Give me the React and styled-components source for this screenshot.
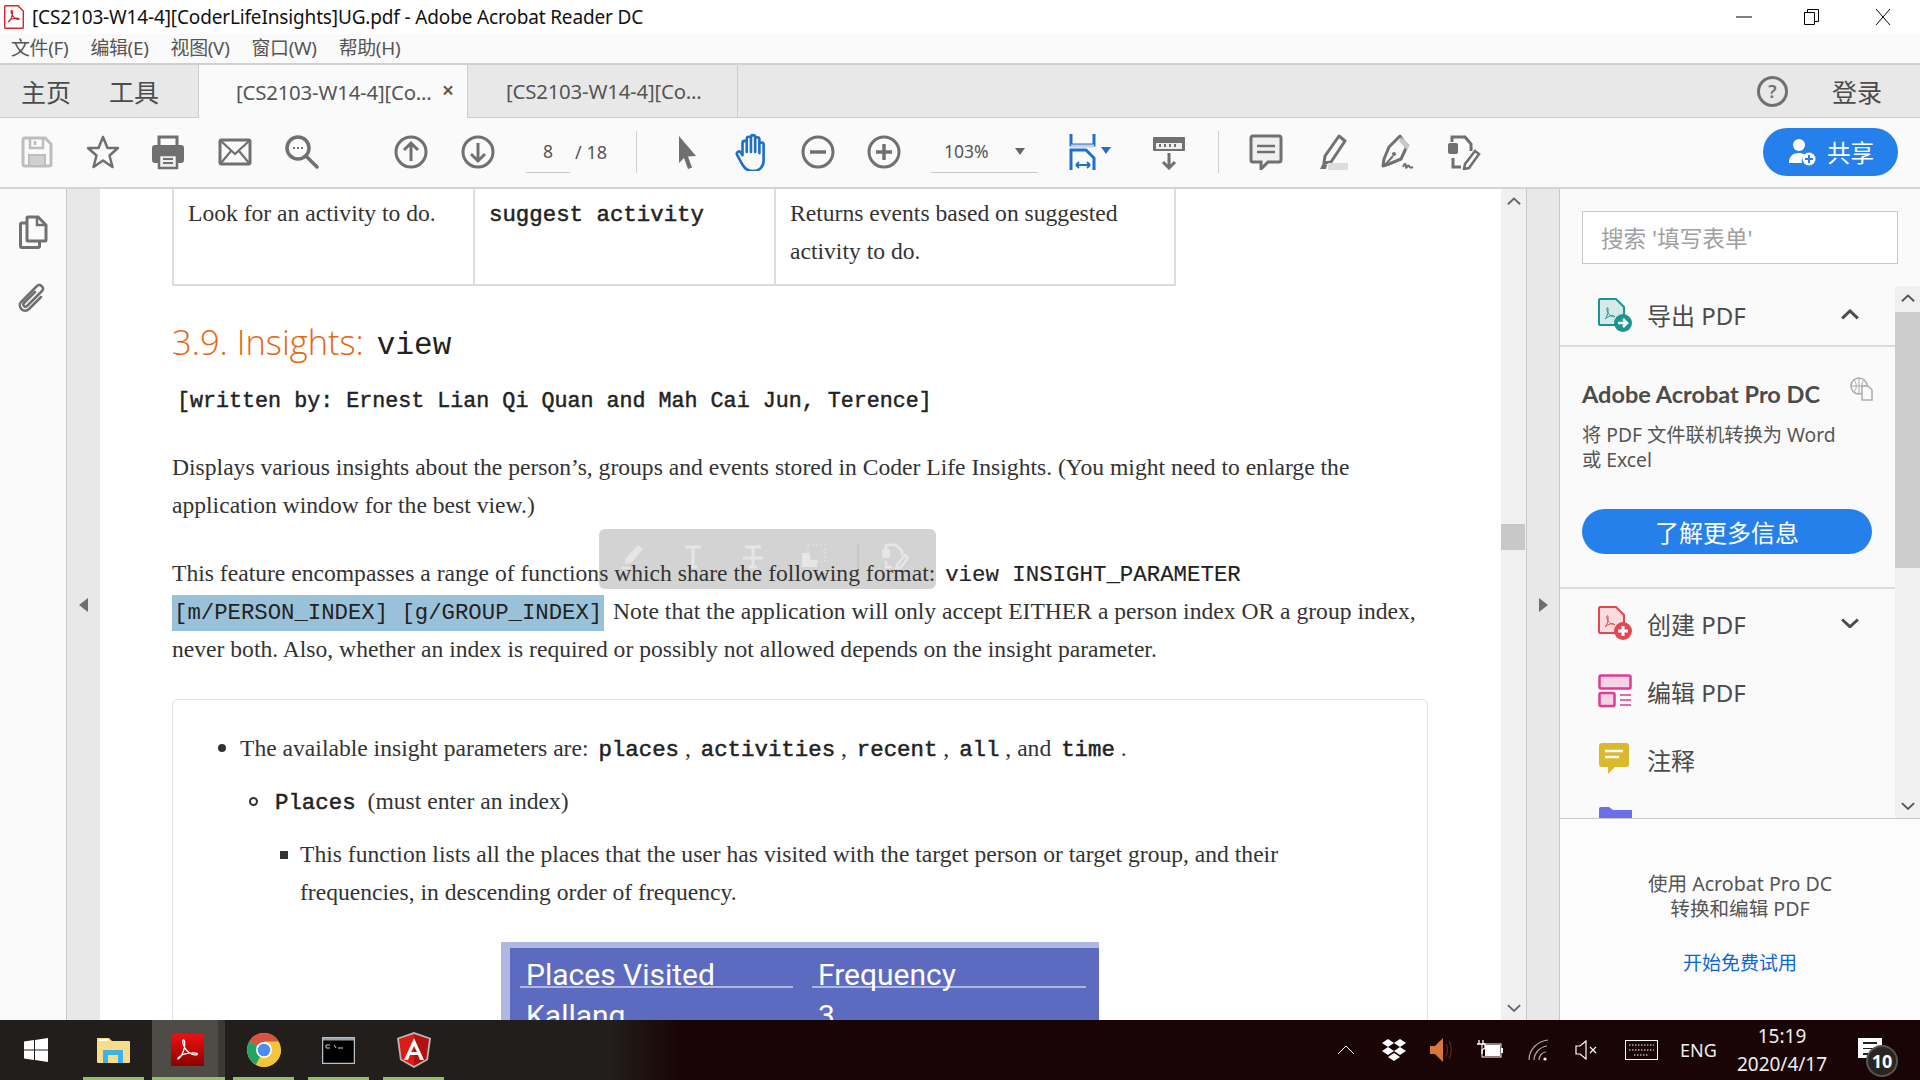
import React from "react";
import styled, { createGlobalStyle } from "styled-components";

const sans = `"Noto Sans", "Noto Sans CJK SC", sans-serif`;
const serif = `"Liberation Serif", serif`;
const mono = `"Liberation Mono", monospace`;

const GlobalStyle = createGlobalStyle`
  html, body { margin: 0; padding: 0; overflow: hidden; background: #fff; }
  * { box-sizing: border-box; }
`;

const Window = styled.div`
  width: 1920px;
  height: 1080px;
  display: flex;
  flex-direction: column;
  overflow: hidden;
  font-family: ${sans};
`;

const TitleBar = styled.div`
  height: 34px;
  flex: none;
  display: flex;
  align-items: center;
  padding-left: 4px;
  background: #fff;
  color: #111;
  font-size: 19px;
  white-space: nowrap;
`;

const TitleText = styled.span`
  margin: -1px 0 0 8px;
  letter-spacing: -0.15px;
`;

const WindowControls = styled.div`
  margin-left: auto;
  display: flex;
  align-items: center;
  height: 100%;
`;

const WindowButton = styled.div`
  width: ${(p) => p.$w || 68}px;
  height: 100%;
  display: flex;
  align-items: center;
  justify-content: center;
`;

const MenuBar = styled.div`
  height: 31px;
  flex: none;
  display: flex;
  align-items: center;
  gap: 22px;
  padding: 0 0 4px 11px;
  background: #fafafa;
  border-bottom: 2px solid #d0d0d0;
  color: #555;
  font-size: 18.9px;
  letter-spacing: -0.3px;
`;

const TabBar = styled.div`
  height: 53px;
  flex: none;
  display: flex;
  align-items: stretch;
  background: #e8e8e8;
  border-bottom: 1px solid #cdcdcd;
`;

const NavLink = styled.div`
  display: flex;
  align-items: center;
  width: ${(p) => p.$w}px;
  padding-left: ${(p) => p.$pad}px;
  color: #4b4b4b;
  font-size: 25px;
`;

const Tab = styled.div`
  width: 270px;
  margin-bottom: ${(p) => (p.$active ? "-1px" : "0")};
  position: relative;
  display: flex;
  align-items: center;
  padding-left: ${(p) => (p.$active ? 37 : 38)}px;
  background: ${(p) => (p.$active ? "#fafafa" : "#e8e8e8")};
  border-left: ${(p) => (p.$active ? "1px solid #cdcdcd" : "none")};
  border-right: 1px solid #cdcdcd;
  color: #555;
  font-size: 20.4px;
  letter-spacing: -0.2px;
`;

const TabClose = styled.span`
  position: absolute;
  left: 243px;
  top: 11px;
  color: #555;
  font-size: 21px;
  font-weight: 600;
`;

const TabBarEnd = styled.div`
  margin-left: auto;
  display: flex;
  align-items: center;
`;

const HelpCircle = styled.div`
  width: 31px;
  height: 31px;
  border: 3px solid #707070;
  border-radius: 50%;
  display: flex;
  align-items: center;
  justify-content: center;
  color: #707070;
  font-size: 18px;
  font-weight: 600;
`;

const Login = styled.div`
  margin: 0 38px 0 44px;
  color: #4b4b4b;
  font-size: 25px;
`;

const Toolbar = styled.div`
  height: 71px;
  flex: none;
  display: flex;
  align-items: center;
  padding: 0 0 2px 4px;
  background: #fafafa;
  border-bottom: 2px solid #d4d4d4;
`;

const ToolButton = styled.div`
  width: ${(p) => p.$w || 66}px;
  flex: none;
  margin-left: ${(p) => p.$ml || 0}px;
  display: flex;
  justify-content: center;
  align-items: center;
`;

const PageInput = styled.div`
  width: 44px;
  height: 42px;
  flex: none;
  margin-left: 15px;
  display: flex;
  align-items: center;
  justify-content: center;
  border-bottom: 1px solid #c8c8c8;
  color: #555;
  font-size: 17.5px;
`;

const PageTotal = styled.div`
  width: 66px;
  flex: none;
  padding-left: 5px;
  color: #555;
  font-size: 18px;
`;

const ToolDivider = styled.div`
  width: 1px;
  height: 42px;
  flex: none;
  margin: 0 ${(p) => p.$mr || 0}px 0 ${(p) => p.$ml || 0}px;
  background: #d0d0d0;
`;

const ZoomCombo = styled.div`
  width: 107px;
  height: 42px;
  flex: none;
  margin-left: 14px;
  display: flex;
  align-items: center;
  justify-content: space-between;
  padding: 0 13px 0 13px;
  border-bottom: 1px solid #c8c8c8;
  color: #555;
  font-size: 17.5px;
`;

const Caret = styled.span`
  width: 0;
  height: 0;
  border-left: 5px solid transparent;
  border-right: 5px solid transparent;
  border-top: 7px solid ${(p) => p.$color || "#666"};
`;

const ShareButton = styled.div`
  margin-left: auto;
  margin-right: 22px;
  width: 135px;
  height: 48px;
  flex: none;
  display: flex;
  align-items: center;
  justify-content: center;
  gap: 10px;
  border-radius: 24px;
  background: #2680eb;
  color: #fff;
  font-size: 23.5px;
`;

const Main = styled.div`
  flex: 1;
  min-height: 0;
  display: flex;
`;

const LeftRail = styled.div`
  width: 67px;
  flex: none;
  display: flex;
  flex-direction: column;
  align-items: center;
  gap: 33px;
  padding: 26px 0 0 2px;
  background: #fafafa;
  border-right: 1px solid #c8c8c8;
`;

const Gutter = styled.div`
  width: ${(p) => p.$w}px;
  flex: none;
  display: flex;
  align-items: center;
  justify-content: center;
  background: #e8e8e8;
`;

const Triangle = styled.span`
  width: 0;
  height: 0;
  border-top: 7px solid transparent;
  border-bottom: 7px solid transparent;
  ${(p) => (p.$right ? "border-left: 9px solid #6e6e6e;" : "border-right: 9px solid #6e6e6e;")}
`;

const DocPage = styled.div`
  position: relative;
  width: 1401px;
  flex: none;
  overflow: hidden;
  padding-left: 72px;
  background: #fff;
  color: #333;
  font-family: ${serif};
  font-size: 23.6px;
  line-height: 38px;
`;

const TableRow = styled.div`
  display: grid;
  grid-template-columns: 301px 301px 402px;
  width: 1004px;
  height: 97px;
  border: 2px solid #ddd;
  border-top: none;
`;

const TableCell = styled.div`
  padding: 5px 14px 0;
  white-space: nowrap;
  border-right: ${(p) => (p.$last ? "none" : "2px solid #ddd")};
`;

const Code = styled.code`
  margin: 0 ${(p) => p.$mr || 0}px 0 ${(p) => p.$ml ?? 4}px;
  font-family: ${mono};
  font-size: 22.4px;
  line-height: 0;
  color: #222;
  -webkit-text-stroke: ${(p) => (p.$bold ? "0.5px #222" : "0.15px #222")};
`;

const Heading = styled.h3`
  margin: 34px 0 0;
  height: 44px;
  display: flex;
  align-items: center;
  gap: 13px;
  color: #e8650f;
  font-family: "Open Sans", sans-serif;
  font-size: 34.5px;
  font-weight: 300;
  line-height: 44px;
`;

const HeadingCode = styled.code`
  margin-top: 8px;
  color: #222;
  font-family: ${mono};
  font-size: 31px;
`;

const Byline = styled.div`
  margin: 19px 0 0 5px;
  color: #222;
  font-family: ${mono};
  font-size: 21.7px;
  -webkit-text-stroke: 0.45px #222;
  white-space: nowrap;
`;

const Para = styled.p`
  position: relative;
  z-index: 1;
  margin: ${(p) => p.$mt}px 0 0;
  white-space: nowrap;
`;

const Highlight = styled.span`
  margin-right: 3px;
  padding: 5px 2px;
  background: #9ac1da;
  font-family: ${mono};
  font-size: 22.3px;
  line-height: 0;
  color: #222;
`;

const Card = styled.div`
  width: 1256px;
  height: 400px;
  margin-top: 31px;
  padding-top: 29px;
  border: 1px solid #e2e2e2;
  border-radius: 6px;
`;

const ListItem = styled.div`
  position: relative;
  margin: ${(p) => p.$mt || 0}px 0 0 ${(p) => p.$ml}px;
  white-space: nowrap;
`;

const Marker = styled.span`
  position: absolute;
  top: ${(p) => (p.$kind === "square" ? 16 : 15)}px;
  left: ${(p) => p.$left}px;
  width: ${(p) => (p.$kind === "circle" ? 9 : 8)}px;
  height: ${(p) => (p.$kind === "circle" ? 9 : 8)}px;
  border-radius: ${(p) => (p.$kind === "square" ? 0 : "50%")};
  background: ${(p) => (p.$kind === "circle" ? "transparent" : "#333")};
  border: ${(p) => (p.$kind === "circle" ? "2px solid #333" : "none")};
`;

const Screenshot = styled.div`
  width: 598px;
  height: 120px;
  margin: 31px 0 0 328px;
  padding: 6px 0 0 9px;
  background: #b0b7e0;
`;

const ScreenshotInner = styled.div`
  display: grid;
  grid-template-columns: 273px 274px;
  column-gap: 19px;
  align-content: start;
  height: 100%;
  padding: 8px 12px 0 10px;
  background: #5c6bc0;
  color: #fff;
  font-family: Roboto, sans-serif;
  font-size: 30px;
  line-height: 32px;
`;

const ScreenshotHead = styled.div`
  height: 32px;
  padding-left: 6px;
  line-height: 38px;
  border-bottom: 2px solid #aeb6e2;
`;

const ScreenshotCell = styled.div`
  margin-top: 12px;
  padding-left: 6px;
`;

const FloatingBar = styled.div`
  position: absolute;
  left: 499px;
  top: 340px;
  width: 337px;
  height: 60px;
  display: flex;
  align-items: flex-start;
  padding: 14px 0 0 4px;
  border-radius: 6px;
  background: #d3d3d3;
`;

const FloatSlot = styled.div`
  width: ${(p) => p.$w}px;
  flex: none;
  display: flex;
  justify-content: center;
`;

const DocScroll = styled.div`
  position: relative;
  width: 26px;
  flex: none;
  background: #f0f0f0;
  border-right: 1px solid #c8c8c8;
`;

const ScrollThumb = styled.div`
  position: absolute;
  left: 0;
  top: 335px;
  width: 24px;
  height: 26px;
  background: #c8c8c8;
`;

const ScrollArrow = styled.div`
  position: absolute;
  left: 0;
  right: 0;
  ${(p) => (p.$down ? "bottom: 8px;" : "top: 8px;")}
  display: flex;
  justify-content: center;
`;

const RightPanel = styled.div`
  flex: 1;
  min-width: 0;
  display: flex;
  flex-direction: column;
  background: #fafafa;
  border-left: 1px solid #c8c8c8;
`;

const SearchArea = styled.div`
  height: 97px;
  flex: none;
  padding: 22px 22px 0 22px;
`;

const SearchBox = styled.div`
  height: 53px;
  display: flex;
  align-items: center;
  padding-left: 18px;
  background: #fff;
  border: 1px solid #c8c8c8;
  color: #a0a0a0;
  font-size: 22.6px;
`;

const ToolArea = styled.div`
  position: relative;
  height: 533px;
  flex: none;
  display: flex;
  border-bottom: 1px solid #c8c8c8;
`;

const ToolList = styled.div`
  width: 335px;
  flex: none;
  overflow: hidden;
`;

const ToolRow = styled.div`
  height: ${(p) => p.$h}px;
  display: flex;
  align-items: center;
  gap: 15px;
  padding: 0 36px ${(p) => (p.$divider ? 2 : 0)}px 38px;
  border-bottom: ${(p) => (p.$divider ? "2px solid #ddd" : "none")};
  color: #4b4b4b;
  font-size: 24px;
  white-space: nowrap;
`;

const RowChevron = styled.div`
  margin-left: auto;
  display: flex;
`;

const Promo = styled.div`
  position: relative;
  height: 242px;
  padding: 29px 22px 0;
  border-bottom: 2px solid #ddd;
`;

const PromoTitle = styled.div`
  height: 36px;
  color: #4b4b4b;
  font-family: Lato, ${sans};
  font-size: 23.5px;
  font-weight: 700;
  line-height: 36px;
`;

const PromoGlobe = styled.div`
  position: absolute;
  right: 21px;
  top: 30px;
  display: flex;
`;

const PromoText = styled.div`
  margin-top: 10px;
  color: #555;
  font-size: 19.3px;
  line-height: 25px;
  white-space: nowrap;
`;

const PromoButton = styled.div`
  width: 290px;
  height: 45px;
  margin-top: 37px;
  display: flex;
  align-items: center;
  justify-content: center;
  border-radius: 23px;
  background: #2680eb;
  color: #fff;
  font-size: 24px;
`;

const PanelScroll = styled.div`
  position: relative;
  width: 25px;
  flex: none;
  background: #f0f0f0;
`;

const PanelThumb = styled.div`
  position: absolute;
  left: 0;
  right: 0;
  top: 26px;
  height: 256px;
  background: #cdcdcd;
`;

const PanelFooter = styled.div`
  flex: 1;
  display: flex;
  flex-direction: column;
  align-items: center;
  padding-top: 52px;
  background: #fcfcfc;
  color: #555;
  font-size: 19.6px;
  line-height: 25px;
  text-align: center;
`;

const FooterLink = styled.div`
  margin-top: 30px;
  color: #0d66d0;
  font-size: 19px;
`;

const Taskbar = styled.div`
  height: 60px;
  flex: none;
  display: flex;
  align-items: center;
  background: linear-gradient(90deg, #211e1b 0, #211e1b 610px, #190505 680px, #190505 100%);
  color: #fff;
`;

const StartButton = styled.div`
  width: 83px;
  height: 100%;
  flex: none;
  padding-left: 24px;
  display: flex;
  align-items: center;
`;

const AppSlot = styled.div`
  width: ${(p) => (p.$active ? 73 : 61)}px;
  height: 100%;
  flex: none;
  margin-right: ${(p) => p.$mr}px;
  display: flex;
  justify-content: ${(p) => (p.$active ? "flex-start" : "center")};
  align-items: center;
  padding-left: ${(p) => (p.$active ? 19 : 0)}px;
  background: ${(p) => (p.$active ? "linear-gradient(90deg, #4f4b47 0 66px, #3c3936 66px)" : "none")};
  box-shadow: inset 0 -3px 0 #8fc45b;
`;

const Tray = styled.div`
  margin-left: auto;
  display: flex;
  align-items: center;
  height: 100%;
`;

const TrayItem = styled.div`
  width: ${(p) => p.$w}px;
  flex: none;
  display: flex;
  justify-content: center;
  align-items: center;
`;

const Lang = styled.div`
  width: 45px;
  flex: none;
  margin-left: 3px;
  font-size: 18px;
  text-align: center;
  color: #eee;
`;

const Clock = styled.div`
  width: 108px;
  flex: none;
  margin-left: 7px;
  color: #eee;
  font-size: 19px;
  line-height: 28px;
  text-align: center;
`;

const Notify = styled.div`
  position: relative;
  width: 84px;
  flex: none;
  height: 100%;
`;

const NotifyBubble = styled.div`
  position: absolute;
  left: 22px;
  top: 18px;
  width: 24px;
  height: 20px;
  background: #fff;
`;

const NotifyLine = styled.div`
  width: 14px;
  height: 1.5px;
  margin: 4px 0 0 5px;
  background: #222;
`;

const NotifyBadge = styled.div`
  position: absolute;
  left: 30px;
  top: 25px;
  width: 32px;
  height: 32px;
  display: flex;
  align-items: center;
  justify-content: center;
  border-radius: 50%;
  border: 2px solid #555;
  background: #2a2522;
  color: #fff;
  font-size: 18px;
  font-weight: 700;
`;

const Svg = ({ s = 36, w, h, box = "0 0 36 36", children, ...rest }) => (
  <svg width={w || s} height={h || s} viewBox={box} fill="none" {...rest}>
    {children}
  </svg>
);

const G = "#707070";

const swoosh =
  "M7 25c2-1 4-5 5-9 1-3 1-8-.5-8-2 0 0 8 5 12 2 1.5 6 2.500 6 1 0-2-7-1.500-11 0-3 1.500-5 3-4.500 4z";

const SaveIcon = () => (
  <Svg>
    <path d="M6 4h20l6 6v20a2 2 0 0 1-2 2H6a2 2 0 0 1-2-2V6a2 2 0 0 1 2-2z" stroke="#bdbdbd" strokeWidth="3" />
    <path d="M11 4v10h13V4M16 7v4" stroke="#bdbdbd" strokeWidth="2.500" />
    <path d="M10 32V21h16v11z" fill="#d0d0d0" stroke="#bdbdbd" strokeWidth="2" />
  </Svg>
);

const StarIcon = () => (
  <Svg>
    <path d="M18 3l4.500 11H33l-8.500 7.500L27.500 33 18 26.500 8.500 33l3-11.500L3 14h10.500z" stroke={G} strokeWidth="2.500" strokeLinejoin="round" />
  </Svg>
);

const PrintIcon = () => (
  <Svg>
    <path d="M9 12V3h18v9" stroke={G} strokeWidth="3" />
    <path d="M5 11h26a3 3 0 0 1 3 3v12a3 3 0 0 1-3 3h-3v-8H8v8H5a3 3 0 0 1-3-3V14a3 3 0 0 1 3-3z" fill={G} />
    <path d="M9 21h18v13H9z" fill="#eee" stroke={G} strokeWidth="2.500" />
    <path d="M13 25h10M13 29h10" stroke={G} strokeWidth="2" />
  </Svg>
);

const MailIcon = () => (
  <Svg>
    <rect x="3" y="6" width="30" height="24" rx="1.500" stroke={G} strokeWidth="3" />
    <path d="M4 7l14 13L32 7M4 29l10-12M32 29L22 17" stroke={G} strokeWidth="2.200" />
  </Svg>
);

const SearchIcon = () => (
  <Svg>
    <circle cx="15" cy="14" r="11" stroke={G} strokeWidth="3.500" />
    <path d="M23 22l11 11" stroke={G} strokeWidth="3.500" strokeLinecap="round" />
    <path d="M10 14h2M14 14h2M18 14h2" stroke={G} strokeWidth="2" />
  </Svg>
);

const ArrowCircle = ({ down }) => (
  <Svg style={down ? { transform: "rotate(180deg)" } : undefined}>
    <circle cx="18" cy="18" r="15" stroke={G} strokeWidth="3" />
    <path d="M18 27V10M11 16l7-7 7 7" stroke={G} strokeWidth="3" />
  </Svg>
);

const PointerIcon = () => (
  <Svg>
    <path d="M9 2l17 20-8 .5 4 11-4 1.500-4-11-5 5z" fill={G} />
  </Svg>
);

const HandIcon = () => (
  <Svg s={38}>
    <path
      d="M9 21V9.500a2 2 0 0 1 4 0V18 5.500a2 2 0 0 1 4 0V18 4a2 2 0 0 1 4 0v14V6a2 2 0 0 1 4 0v13 -8a2 2 0 0 1 4 0v15c0 6-4 10-10 10-5 0-8-2-10-6L4 21c-1.500-3 2-4.500 3.500-2.500L9 21z"
      stroke="#2070c8"
      strokeWidth="2.500"
      strokeLinejoin="round"
    />
  </Svg>
);

const ZoomCircle = ({ plus }) => (
  <Svg>
    <circle cx="18" cy="18" r="15" stroke={G} strokeWidth="3" />
    <path d={plus ? "M10 18h16M18 10v16" : "M10 18h16"} stroke={G} strokeWidth="3.500" />
  </Svg>
);

const FitIcon = () => (
  <Svg w={46} h={38} box="0 0 46 38">
    <path d="M3 1v11h23V1" stroke="#2070c8" strokeWidth="3" />
    <path d="M3 13h23" stroke="#ccd" strokeWidth="3" />
    <path d="M3 37V17h15l8 8v12" stroke="#2070c8" strokeWidth="3" />
    <path d="M8 32h14M8 32l3-3M8 32l3 3M22 32l-3-3M22 32l-3 3" stroke="#2070c8" strokeWidth="1.800" />
    <path d="M33 14h10l-5 7z" fill="#2070c8" />
  </Svg>
);

const ScrollToolIcon = () => (
  <Svg>
    <rect x="2" y="3" width="32" height="14" rx="1" fill={G} />
    <rect x="5" y="9" width="26" height="6" fill="#eee" />
    <path d="M9 10v3M14 10v3M19 10v3M24 10v3" stroke={G} strokeWidth="2" />
    <path d="M18 19v15M12 28l6 6 6-6" stroke={G} strokeWidth="3" />
  </Svg>
);

const CommentIcon = () => (
  <Svg>
    <path d="M5 2h26a2 2 0 0 1 2 2v22a2 2 0 0 1-2 2H20l-7 7v-7H5a2 2 0 0 1-2-2V4a2 2 0 0 1 2-2z" stroke={G} strokeWidth="3" fill="#f0f0f0" />
    <path d="M9 12h18M9 18h18" stroke={G} strokeWidth="2.500" />
  </Svg>
);

const HighlightIcon = () => (
  <Svg>
    <path d="M25 2l6 5-14 21-7 1 1-7z" stroke={G} strokeWidth="3" strokeLinejoin="round" />
    <path d="M6 35l3-6 4 2-1 4z" fill={G} />
    <rect x="14" y="29" width="20" height="7" fill="#ddd" />
  </Svg>
);

const SignIcon = () => (
  <Svg>
    <path d="M20 2l7 10-6 13-12 5-6 2 1-7 5-12z" stroke={G} strokeWidth="3" strokeLinejoin="round" />
    <path d="M21 3l9 8-3 5-8-9z" fill="#c8c8c8" />
    <path d="M5 31l8-9" stroke={G} strokeWidth="2" />
    <circle cx="14" cy="20" r="2" fill={G} />
    <path d="M23 33c2-5 3-3 3 0s2-3 3-1 2 2 4 1" stroke={G} strokeWidth="2" />
  </Svg>
);

const ToolsIcon = () => (
  <Svg>
    <path d="M6 8V3h13l6 7v7" stroke={G} strokeWidth="3" />
    <rect x="2" y="9" width="10" height="11" rx="2" fill={G} />
    <path d="M7 24v9h8" stroke={G} strokeWidth="3" />
    <path d="M29 17l4 3-10 14-5 1 1-5z" stroke={G} strokeWidth="2.500" />
  </Svg>
);

const PagesIcon = () => (
  <Svg w={30} h={34} box="0 0 30 34">
    <path d="M9 8H3a1.500 1.500 0 0 0-1.500 1.500V31A1.500 1.500 0 0 0 3 32.500h16a1.500 1.500 0 0 0 1.500-1.500v-4" stroke={G} strokeWidth="3" />
    <path d="M9 2h10l8 8v15a1 1 0 0 1-1 1H9a1 1 0 0 1-1-1V3a1 1 0 0 1 1-1z" stroke={G} strokeWidth="3" fill="#fafafa" />
    <path d="M18 2v8h9" stroke={G} strokeWidth="2.500" />
  </Svg>
);

const ClipIcon = () => (
  <Svg s={32} box="0 0 32 32" style={{ marginLeft: -4 }}>
    <path
      d="M19 10L8 21c-2 2 1 5 3 3L26 9c3-3-2-8-5-5L5 20c-4 5 3 12 8 7l12-12"
      stroke={G}
      strokeWidth="2.500"
      strokeLinecap="round"
    />
  </Svg>
);

const ShareUserIcon = () => (
  <Svg s={30} box="0 0 30 30">
    <circle cx="12" cy="8" r="6" fill="#fff" />
    <path d="M2 26c0-7 4-10 10-10 3 0 5 1 6 2-3 2-4 5-3 8z" fill="#fff" />
    <circle cx="22" cy="22" r="6.500" fill="#fff" />
    <path d="M22 18v8M18 22h8" stroke="#2680eb" strokeWidth="2" />
  </Svg>
);

const Chevron = ({ down, size = 18, color = "#4b4b4b", weight = 3 }) => (
  <svg width={size} height={size * 0.6} viewBox="0 0 18 11" fill="none">
    <path d={down ? "M1 1.500l8 7.500 8-7.500" : "M1 9.500L9 2l8 7.500"} stroke={color} strokeWidth={weight} />
  </svg>
);

const DocBadge = ({ color, tint, children }) => (
  <Svg s={34} box="0 0 34 34">
    <path d="M2 1h16l8 8v18H2a1 1 0 0 1-1-1V2a1 1 0 0 1 1-1z" fill={tint} stroke={color} strokeWidth="2" />
    <path d="M7 21c2-2 3-5 3-8s0-4-1-3 1 7 5 8 3 1 2 0-6 0-9 3z" stroke={color} strokeWidth="1" />
    <circle cx="25" cy="25" r="9" fill={color} />
    {children}
  </Svg>
);

const ExportIcon = () => (
  <DocBadge color="#1c9590" tint="#d5e9e8">
    <path d="M20 25h8M25 21l4 4-4 4" stroke="#fff" strokeWidth="2.500" />
  </DocBadge>
);

const CreateIcon = () => (
  <DocBadge color="#e34850" tint="#f9dcdd">
    <path d="M20 25h10M25 20v10" stroke="#fff" strokeWidth="3" />
  </DocBadge>
);

const EditIcon = () => (
  <Svg s={34} box="0 0 34 34">
    <rect x="1.500" y="1.500" width="31" height="13" rx="1.500" fill="#f6d3e6" stroke="#e03d92" strokeWidth="2.500" />
    <rect x="1.500" y="19" width="15" height="13" rx="1.500" fill="#f6d3e6" stroke="#e03d92" strokeWidth="2.500" />
    <path d="M22 21h11M22 26h11M22 31h11" stroke="#e03d92" strokeWidth="1.500" />
  </Svg>
);

const NoteIcon = () => (
  <Svg s={34} box="0 0 34 34">
    <path d="M4 1h24a3 3 0 0 1 3 3v18a3 3 0 0 1-3 3H17l-7 7v-7H4a3 3 0 0 1-3-3V4a3 3 0 0 1 3-3z" fill="#dcb82c" />
    <path d="M7 9h18M7 15h14" stroke="#fff" strokeWidth="2.500" />
  </Svg>
);

const NextToolIcon = () => (
  <Svg s={36} box="0 0 36 36">
    <path d="M1 18V4a2 2 0 0 1 2-2h8l4 3h10l9 0v13" fill="#6c6fe8" />
  </Svg>
);

const GlobeIcon = () => (
  <Svg s={24} box="0 0 24 24">
    <circle cx="9" cy="9" r="8" stroke="#aaa" strokeWidth="1.500" />
    <path d="M1 9h16M9 1v16M4 3c3 3 3 9 0 12M14 3c-3 3-3 9 0 12" stroke="#aaa" strokeWidth="1" />
    <path d="M12 9h6l4 4v10H12z" fill="#fafafa" stroke="#aaa" strokeWidth="1.500" />
  </Svg>
);

const PdfFileIcon = () => (
  <Svg w={20} h={26} box="0 0 30 36">
    <path d="M3 1h18l8 8v24a2 2 0 0 1-2 2H3a2 2 0 0 1-2-2V3a2 2 0 0 1 2-2z" fill="#fff" stroke="#d8232a" strokeWidth="2.200" />
    <path d={swoosh} stroke="#d8232a" strokeWidth="1.800" />
  </Svg>
);

const WindowsLogo = () => (
  <Svg s={24} box="0 0 24 24">
    <path d="M0 3.500l10-1.400v9.400H0zM11 2l13-2v11.500H11zM0 12.500h10v9.400L0 20.500zM11 12.500h13V24l-13-2z" fill="#fff" />
  </Svg>
);

const FolderLogo = () => (
  <Svg w={33} h={28} box="0 0 33 28">
    <path d="M0 2h12l3 3h17a1 1 0 0 1 1 1v20a1 1 0 0 1-1 1H1a1 1 0 0 1-1-1z" fill="#f9dc8a" />
    <path d="M2 3h9v2H2z" fill="#fff" />
    <path d="M6 14h20v13h-5v-8h-10v8H6z" fill="#3bb3e6" />
  </Svg>
);

const AcrobatLogo = () => (
  <svg width="33" height="32" viewBox="0 0 33 32" fill="none">
    <defs>
      <linearGradient id="acr" x1="0" y1="0" x2="0" y2="1">
        <stop offset="0" stopColor="#ee1111" />
        <stop offset="1" stopColor="#8c0000" />
      </linearGradient>
    </defs>
    <rect width="33" height="32" fill="url(#acr)" />
    <path d="M7 25c3-2 5-6 6-10 1-4 1-9-.5-9-2 0 0 9 6 13 3 2 8 2.500 8 1 0-2-9-1-13 0-4 1.500-7 3.500-6.500 5z" stroke="#fff" strokeWidth="1.300" />
  </svg>
);

const ChromeLogo = () => (
  <Svg s={34} box="0 0 34 34">
    <circle cx="17" cy="17" r="17" fill="#f3c53b" />
    <path d="M17 17L2.300 8.500A17 17 0 0 1 31.700 8.500H17z" fill="#d95244" />
    <path d="M17 17L9 31.700A17 17 0 0 1 2.300 8.500z" fill="#1fa463" />
    <path d="M17 17h17a17 17 0 0 1-25 14.700z" fill="#f3c53b" />
    <circle cx="17" cy="17" r="8" fill="#fff" />
    <circle cx="17" cy="17" r="6.300" fill="#4b8df0" />
  </Svg>
);

const CmdLogo = () => (
  <svg width="33" height="27" viewBox="0 0 33 27" fill="none">
    <rect x="0.500" y="0.500" width="32" height="26" fill="#000" stroke="#b8c0c8" strokeWidth="1.500" />
    <rect x="1" y="1" width="31" height="2.500" fill="#9aa2aa" />
    <path d="M4 8h4M4 11h4M4 8v3M10 9v0M12 8l2 3M16 11h5" stroke="#ccc" strokeWidth="1" />
  </svg>
);

const AngularLogo = () => (
  <Svg w={36} h={36} box="0 0 36 36">
    <path d="M18 0L1 6l3 22 14 8 14-8 3-22z" fill="#b8b8b8" />
    <path d="M18 2L3 7l2.600 20L18 34z" fill="#dd1b16" />
    <path d="M18 2l15 5-2.600 20L18 34z" fill="#b31010" />
    <path d="M18 6L8 28h4l2-5h8l2 5h4zM18 14l3 6h-6z" fill="#fff" />
  </Svg>
);

const DropboxIcon = () => (
  <Svg w={24} h={24} box="0 0 24 24">
    <path d="M6 1l6 4-6 4-6-4zM18 1l6 4-6 4-6-4zM6 9l6 4-6 4-6-4zM18 9l6 4-6 4-6-4zM12 15l6 4-6 4-6-4z" fill="#fff" />
  </Svg>
);

const SpeakerIcon = () => (
  <Svg w={24} h={26} box="0 0 24 26">
    <path d="M0 9h5l8-8v24l-8-8H0z" fill="#d9763a" />
    <path d="M16 7c2 3 2 9 0 12M19 4c3 5 3 13 0 18" stroke="#5a2a18" strokeWidth="1.200" />
  </Svg>
);

const BatteryIcon = () => (
  <Svg w={26} h={20} box="0 0 26 20">
    <path d="M2 0v4M6 0v4M0 4h8v4l-3 2v4" stroke="#fff" strokeWidth="1.300" />
    <rect x="5" y="4" width="19" height="13" stroke="#fff" strokeWidth="1" />
    <rect x="8" y="5" width="15" height="11" fill="#fff" />
    <rect x="24" y="8" width="2" height="5" fill="#fff" />
  </Svg>
);

const WifiIcon = () => (
  <Svg s={22} box="0 0 22 22">
    <path d="M1 21C1 10 10 2 20 1M6 21c0-7 6-13 13-14M11 21c0-4 3-8 7-8" stroke="#aaa" strokeWidth="1.200" />
    <circle cx="17" cy="20" r="1.600" fill="#fff" />
  </Svg>
);

const MuteIcon = () => (
  <Svg w={22} h={20} box="0 0 22 20">
    <path d="M1 6h4l6-5v18l-6-5H1z" stroke="#fff" strokeWidth="1.200" />
    <path d="M15 7l6 6M21 7l-6 6" stroke="#fff" strokeWidth="1.200" />
  </Svg>
);

const KeyboardIcon = () => (
  <Svg w={33} h={20} box="0 0 33 20">
    <rect x="0.500" y="0.500" width="32" height="19" stroke="#fff" />
    <path d="M4 5h25M4 10h25M9 15h15" stroke="#fff" strokeDasharray="1.500 1.500" />
  </Svg>
);

const floatColor = "#e6e6e6";

export default function App() {
  return (
    <Window>
      <GlobalStyle />
      <TitleBar>
        <PdfFileIcon />
        <TitleText>[CS2103-W14-4][CoderLifeInsights]UG.pdf - Adobe Acrobat Reader DC</TitleText>
        <WindowControls>
          <WindowButton>
            <svg width="16" height="2"><path d="M0 1h16" stroke="#000" /></svg>
          </WindowButton>
          <WindowButton>
            <svg width="16" height="16" fill="none">
              <path d="M.5 3.500h10v12H.5zM3.500 3.500v-3h11v12h-4" stroke="#000" />
            </svg>
          </WindowButton>
          <WindowButton $w={74}>
            <svg width="16" height="16"><path d="M1 0l14 16M15 0L1 16" stroke="#000" /></svg>
          </WindowButton>
        </WindowControls>
      </TitleBar>

      <MenuBar>
        <span>文件(F)</span>
        <span>编辑(E)</span>
        <span>视图(V)</span>
        <span>窗口(W)</span>
        <span>帮助(H)</span>
      </MenuBar>

      <TabBar>
        <NavLink $w={105} $pad={21}>主页</NavLink>
        <NavLink $w={93} $pad={4}>工具</NavLink>
        <Tab $active>
          [CS2103-W14-4][Co...
          <TabClose>×</TabClose>
        </Tab>
        <Tab>[CS2103-W14-4][Co...</Tab>
        <TabBarEnd>
          <HelpCircle>?</HelpCircle>
          <Login>登录</Login>
        </TabBarEnd>
      </TabBar>

      <Toolbar>
        <ToolButton><SaveIcon /></ToolButton>
        <ToolButton><StarIcon /></ToolButton>
        <ToolButton $ml={-1}><PrintIcon /></ToolButton>
        <ToolButton $ml={1}><MailIcon /></ToolButton>
        <ToolButton><SearchIcon /></ToolButton>
        <ToolButton $ml={44}><ArrowCircle /></ToolButton>
        <ToolButton $ml={1}><ArrowCircle down /></ToolButton>
        <PageInput>8</PageInput>
        <PageTotal>/ 18</PageTotal>
        <ToolDivider $mr={16} />
        <ToolButton $ml={4} $w={62}><PointerIcon /></ToolButton>
        <ToolButton><HandIcon /></ToolButton>
        <ToolButton><ZoomCircle /></ToolButton>
        <ToolButton><ZoomCircle plus /></ToolButton>
        <ZoomCombo>103%<Caret /></ZoomCombo>
        <ToolButton $ml={20}><FitIcon /></ToolButton>
        <ToolButton $ml={12}><ScrollToolIcon /></ToolButton>
        <ToolDivider $ml={16} $mr={14} />
        <ToolButton><CommentIcon /></ToolButton>
        <ToolButton><HighlightIcon /></ToolButton>
        <ToolButton><SignIcon /></ToolButton>
        <ToolButton><ToolsIcon /></ToolButton>
        <ShareButton><ShareUserIcon />共享</ShareButton>
      </Toolbar>

      <Main>
        <LeftRail>
          <PagesIcon />
          <ClipIcon />
        </LeftRail>
        <Gutter $w={33}><Triangle /></Gutter>

        <DocPage>
          <TableRow>
            <TableCell>Look for an activity to do.</TableCell>
            <TableCell><Code $bold $ml={0}>suggest activity</Code></TableCell>
            <TableCell $last>Returns events based on suggested<br />activity to do.</TableCell>
          </TableRow>

          <Heading>3.9. Insights: <HeadingCode>view</HeadingCode></Heading>
          <Byline>[written by: Ernest Lian Qi Quan and Mah Cai Jun, Terence]</Byline>

          <Para $mt={27}>
            Displays various insights about the person’s, groups and events stored in Coder Life Insights. (You might need to enlarge the<br />
            application window for the best view.)
          </Para>

          <Para $mt={30}>
            This feature encompasses a range of functions which share the following format: <Code>view INSIGHT_PARAMETER</Code><br />
            <Highlight>[m/PERSON_INDEX] [g/GROUP_INDEX]</Highlight> Note that the application will only accept EITHER a person index OR a group index,<br />
            never both. Also, whether an index is required or possibly not allowed depends on the insight parameter.
          </Para>

          <Card>
            <ListItem $ml={67}>
              <Marker $left={-22} />
              The available insight parameters are: <Code $bold>places</Code> , <Code $bold>activities</Code> , <Code $bold>recent</Code> , <Code $bold>all</Code> , and <Code $bold>time</Code> .
            </ListItem>
            <ListItem $ml={98} $mt={15}>
              <Marker $left={-22} $kind="circle" />
              <Code $bold $mr={6}>Places</Code> (must enter an index)
            </ListItem>
            <ListItem $ml={127} $mt={15}>
              <Marker $left={-20} $kind="square" />
              This function lists all the places that the user has visited with the target person or target group, and their<br />
              frequencies, in descending order of frequency.
            </ListItem>
            <Screenshot>
              <ScreenshotInner>
                <ScreenshotHead>Places Visited</ScreenshotHead>
                <ScreenshotHead>Frequency</ScreenshotHead>
                <ScreenshotCell>Kallang</ScreenshotCell>
                <ScreenshotCell>3</ScreenshotCell>
              </ScreenshotInner>
            </Screenshot>
          </Card>

          <FloatingBar>
            <FloatSlot $w={60}>
              <svg width="24" height="26" fill="none"><path d="M17 2l5 4-12 14-6 1 1-6z" fill={floatColor} /><path d="M1 25h8" stroke={floatColor} strokeWidth="2" /></svg>
            </FloatSlot>
            <FloatSlot $w={60}>
              <svg width="24" height="26" fill="none"><path d="M4 4h16M12 4v20M8 24h8" stroke={floatColor} strokeWidth="3" /></svg>
            </FloatSlot>
            <FloatSlot $w={60}>
              <svg width="24" height="26" fill="none"><path d="M4 4h16M12 4v20M8 24h8M2 15h20" stroke={floatColor} strokeWidth="3" /></svg>
            </FloatSlot>
            <FloatSlot $w={60}>
              <svg width="26" height="26" fill="none"><path d="M8 2h17v17H8z" stroke={floatColor} strokeDasharray="2 2" /><path d="M2 10h8v7h7v7H2z" fill={floatColor} /></svg>
            </FloatSlot>
            <FloatSlot $w={30}>
              <svg width="2" height="30"><path d="M1 0v30" stroke="#bdbdbd" /></svg>
            </FloatSlot>
            <FloatSlot $w={44}>
              <svg width="28" height="26" fill="none"><path d="M5 6V2h10l6 6v4M5 18v6h6M24 12l3 3-8 10-4 1 1-4z" stroke={floatColor} strokeWidth="2.500" /><rect x="1" y="6" width="8" height="9" rx="1.500" fill={floatColor} /></svg>
            </FloatSlot>
          </FloatingBar>
        </DocPage>

        <DocScroll>
          <ScrollArrow><Chevron size={14} color="#666" weight={2.500} /></ScrollArrow>
          <ScrollThumb />
          <ScrollArrow $down><Chevron down size={14} color="#666" weight={2.500} /></ScrollArrow>
        </DocScroll>
        <Gutter $w={32}><Triangle $right /></Gutter>

        <RightPanel>
          <SearchArea>
            <SearchBox>搜索 '填写表单'</SearchBox>
          </SearchArea>
          <ToolArea>
            <ToolList>
              <ToolRow $h={61} $divider>
                <ExportIcon />
                导出 PDF
                <RowChevron><Chevron /></RowChevron>
              </ToolRow>
              <Promo>
                <PromoTitle>Adobe Acrobat Pro DC</PromoTitle>
                <PromoGlobe><GlobeIcon /></PromoGlobe>
                <PromoText>将 PDF 文件联机转换为 Word<br />或 Excel</PromoText>
                <PromoButton>了解更多信息</PromoButton>
              </Promo>
              <ToolRow $h={68}>
                <CreateIcon />
                创建 PDF
                <RowChevron><Chevron down /></RowChevron>
              </ToolRow>
              <ToolRow $h={68}><EditIcon />编辑 PDF</ToolRow>
              <ToolRow $h={68}><NoteIcon />注释</ToolRow>
              <ToolRow $h={60}><NextToolIcon /></ToolRow>
            </ToolList>
            <PanelScroll>
              <ScrollArrow><Chevron size={14} color="#555" weight={2.500} /></ScrollArrow>
              <PanelThumb />
              <ScrollArrow $down><Chevron down size={14} color="#555" weight={2.500} /></ScrollArrow>
            </PanelScroll>
          </ToolArea>
          <PanelFooter>
            <div>使用 Acrobat Pro DC<br />转换和编辑 PDF</div>
            <FooterLink>开始免费试用</FooterLink>
          </PanelFooter>
        </RightPanel>
      </Main>

      <Taskbar>
        <StartButton><WindowsLogo /></StartButton>
        <AppSlot $mr={8}><FolderLogo /></AppSlot>
        <AppSlot $active $mr={8}><AcrobatLogo /></AppSlot>
        <AppSlot $mr={14}><ChromeLogo /></AppSlot>
        <AppSlot $mr={14}><CmdLogo /></AppSlot>
        <AppSlot $mr={0}><AngularLogo /></AppSlot>
        <Tray>
          <TrayItem $w={48}>
            <svg width="18" height="10" fill="none"><path d="M1 9l8-8 8 8" stroke="#fff" /></svg>
          </TrayItem>
          <TrayItem $w={48}><DropboxIcon /></TrayItem>
          <TrayItem $w={47}><SpeakerIcon /></TrayItem>
          <TrayItem $w={49}><BatteryIcon /></TrayItem>
          <TrayItem $w={49}><WifiIcon /></TrayItem>
          <TrayItem $w={46}><MuteIcon /></TrayItem>
          <TrayItem $w={64}><KeyboardIcon /></TrayItem>
          <Lang>ENG</Lang>
          <Clock>15:19<br />2020/4/17</Clock>
          <Notify>
            <NotifyBubble><NotifyLine /><NotifyLine /><NotifyLine /></NotifyBubble>
            <NotifyBadge>10</NotifyBadge>
          </Notify>
        </Tray>
      </Taskbar>
    </Window>
  );
}
